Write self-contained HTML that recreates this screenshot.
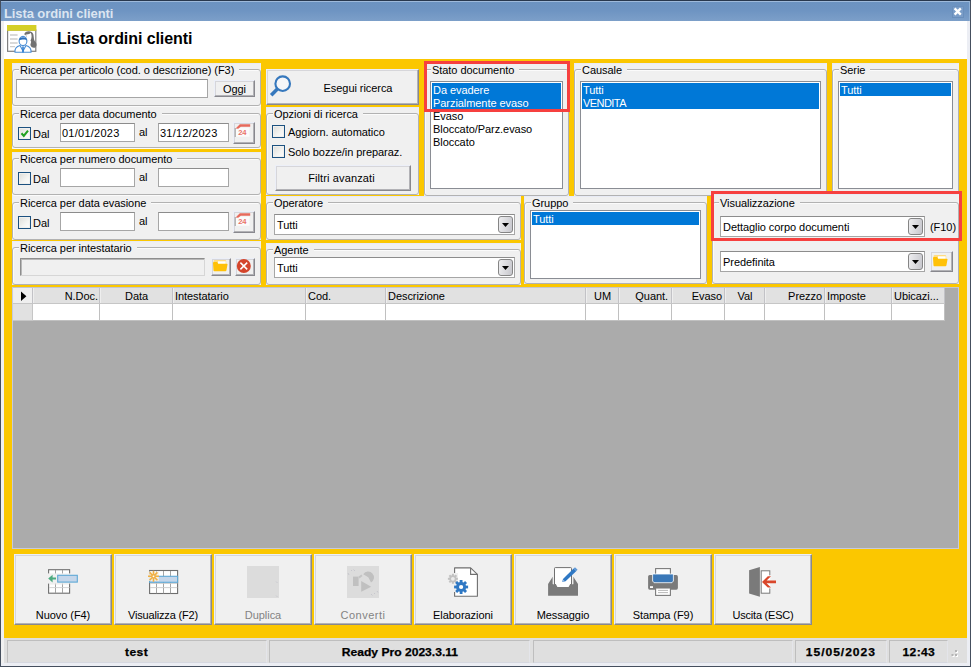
<!DOCTYPE html>
<html><head><meta charset="utf-8"><title>Lista ordini clienti</title>
<style>
*{box-sizing:border-box;margin:0;padding:0}
html,body{width:971px;height:667px;overflow:hidden;background:#f0f0f0}
body{font-family:"Liberation Sans",sans-serif;font-size:11px;color:#000;position:relative;letter-spacing:-0.06px}
.a{position:absolute}
.pn{background:#f0f0f0;box-shadow:inset 1px 1px 0 #e8ebf5}
.gb{border:1px solid #b2b2b2;border-radius:3px;box-shadow:inset 1px 1px 0 #fbfbfb}
.gl{z-index:0;padding:0 5px 0 1px;line-height:15px;height:15px;white-space:nowrap}
.gl::before{content:"";position:absolute;left:0;right:0;top:6px;height:2px;background:#f0f0f0;z-index:-1}
.t{white-space:nowrap;line-height:15px;height:15px}
.in{background:#fff;border:1px solid #a6a6a6;border-top-color:#8c8c8c}
.in .v{position:absolute;left:1px;top:2px;line-height:15px;white-space:nowrap}
.btn{background:#f0f0f0;border:1px solid;border-color:#eceff8 #88888e #88888e #eceff8;box-shadow:inset -1px -1px 0 #b2b2b6,inset 1px 1px 0 #d6d6da}
.btn .c{position:absolute;left:0;right:0;text-align:center;line-height:15px;white-space:nowrap}
.cb{width:13px;height:13px;background:linear-gradient(135deg,#dcdcd8,#f4f4f2 60%,#fdfdfd);border:1px solid #1c5180;box-shadow:inset 0 0 0 1px #f0f0ee}
.lb{background:#fff;border:1px solid #8a8d94}
.sel{background:#0078d7}
.li{position:absolute;left:2px;line-height:15px;height:15px;white-space:nowrap}
.w{color:#fff}
.dd{width:15px;height:17px;border:1px solid #858585;border-radius:3px;background:linear-gradient(100deg,#eeeef0,#d9d9dd 55%,#c6c6cc)}
.red{border:3px solid #f6403f}
.sp{background:#dfdfdf;border:1px solid;border-color:#bebebe #e4e5ea #d6d8e0 #bebebe;font-weight:bold;font-size:11px;text-align:center;line-height:23px;letter-spacing:0;white-space:nowrap}
.sp span{display:inline-block;transform:scaleX(1.1);-webkit-text-stroke:0.25px #000}
.gh{background:#e1e1e1;border-right:1px solid #c2c2c6;border-bottom:1px solid #c6c6c6;height:16px;top:1px;line-height:15px;white-space:nowrap;padding:1px 1px 0 2px;box-shadow:inset 1px 0 0 #eeeeee}
.gc{background:#fff;border-right:1px solid #c0c0c0;border-bottom:1px solid #c0c0c0;height:17px;top:17px}
.bb{top:554px;width:98px;height:71px}
</style></head><body>
<div class="a" style="left:0;top:0;width:971px;height:667px;background:#f0f0f0;border:1px solid #454f5e;border-top-color:#28384e"></div>
<div class="a" style="left:967px;top:21px;width:3px;height:645px;background:#eceef4"></div>
<div class="a" style="left:1px;top:663px;width:969px;height:3px;background:#eceef4"></div>
<div class="a" style="left:1px;top:1px;width:969px;height:20px;background:linear-gradient(#6c93c1,#6e94c2 45%,#7c9fc9);border-top:1px solid #9ebadb;border-right:1px solid #8fafd4"></div>
<div class="a" style="left:4px;top:6px;font-size:13px;font-weight:bold;color:#dbe5f1;line-height:15px;letter-spacing:-0.1px;white-space:nowrap">Lista ordini clienti</div>
<div class="a" style="left:952px;top:6px;width:12px;height:12px;background:#7a9dc8;border:1px solid #6a8fbc"></div>
<div class="a" style="left:4px;top:21px;width:963px;height:38px;background:#fff"></div>
<div class="a" style="left:57px;top:29px;font-size:16px;font-weight:bold;line-height:20px;letter-spacing:-0.08px;white-space:nowrap">Lista ordini clienti</div>
<div class="a" style="left:4px;top:59px;width:963px;height:579px;background:#fbc700"></div>
<div class="a" style="left:4px;top:638px;width:963px;height:25px;background:#dfdfdf"></div>
<div class="a pn" style="left:12px;top:63px;width:249px;height:86px;"></div>
<div class="a pn" style="left:12px;top:152px;width:249px;height:88px;"></div>
<div class="a pn" style="left:12px;top:241px;width:249px;height:44px;"></div>
<div class="a gb" style="left:12px;top:69px;width:249px;height:37px;box-shadow:inset 1px 1px 0 #fbfbfb,0 1px 0 #fbfbfb;"></div>
<div class="a gl" style="left:19px;top:63px;">Ricerca per articolo (cod. o descrizione) (F3)</div>
<div class="a in" style="left:16px;top:79px;width:192px;height:19px;"></div>
<div class="a btn" style="left:214px;top:80px;width:41px;height:17px;"><div class="c" style="top:1px">Oggi</div></div>
<div class="a gb" style="left:12px;top:113px;width:249px;height:35px;box-shadow:inset 1px 1px 0 #fbfbfb,0 1px 0 #fbfbfb;"></div>
<div class="a gl" style="left:19px;top:107px;">Ricerca per data documento</div>
<div class="a cb" style="left:18px;top:127px;width:13px;height:13px;"></div>
<div class="a t" style="left:33px;top:127px;">Dal</div>
<div class="a in" style="left:60px;top:123px;width:75px;height:19px;"><span class="v" style="top:2px;letter-spacing:0.25px">01/01/2023</span></div>
<div class="a t" style="left:139px;top:125px;">al</div>
<div class="a in" style="left:158px;top:123px;width:71px;height:19px;"><span class="v" style="top:2px;letter-spacing:0.25px">31/12/2023</span></div>
<div class="a btn" style="left:233px;top:122px;width:22px;height:22px;"></div>
<div class="a gb" style="left:12px;top:158px;width:249px;height:37px;box-shadow:inset 1px 1px 0 #fbfbfb,0 1px 0 #fbfbfb;"></div>
<div class="a gl" style="left:19px;top:152px;">Ricerca per numero documento</div>
<div class="a cb" style="left:18px;top:172px;width:13px;height:13px;"></div>
<div class="a t" style="left:33px;top:172px;">Dal</div>
<div class="a in" style="left:60px;top:168px;width:75px;height:19px;"></div>
<div class="a t" style="left:139px;top:170px;">al</div>
<div class="a in" style="left:158px;top:168px;width:71px;height:19px;"></div>
<div class="a gb" style="left:12px;top:202px;width:249px;height:38px;"></div>
<div class="a gl" style="left:19px;top:196px;">Ricerca per data evasione</div>
<div class="a cb" style="left:18px;top:216px;width:13px;height:13px;"></div>
<div class="a t" style="left:33px;top:216px;">Dal</div>
<div class="a in" style="left:60px;top:212px;width:75px;height:19px;"></div>
<div class="a t" style="left:139px;top:214px;">al</div>
<div class="a in" style="left:158px;top:212px;width:71px;height:19px;"></div>
<div class="a btn" style="left:233px;top:211px;width:22px;height:22px;"></div>
<div class="a gb" style="left:12px;top:247px;width:249px;height:38px;"></div>
<div class="a gl" style="left:19px;top:241px;">Ricerca per intestatario</div>
<div class="a " style="left:20px;top:258px;width:185px;height:18px;background:#f0f0f0;border:1px solid;border-color:#8e8e8e #d6d6d6 #d6d6d6 #8e8e8e;box-shadow:inset 1px 1px 0 #b8b8b8"></div>
<div class="a btn" style="left:211px;top:258px;width:20px;height:18px;"></div>
<div class="a btn" style="left:235px;top:258px;width:20px;height:18px;"></div>
<div class="a btn" style="left:266px;top:69px;width:153px;height:36px;"><div class="c" style="top:11px;left:31px">Esegui ricerca</div></div>
<div class="a pn" style="left:266px;top:107px;width:153px;height:88px;"></div>
<div class="a gb" style="left:266px;top:113px;width:153px;height:82px;"></div>
<div class="a gl" style="left:273px;top:107px;">Opzioni di ricerca</div>
<div class="a cb" style="left:272px;top:125px;width:13px;height:13px;"></div>
<div class="a t" style="left:288px;top:125px;">Aggiorn. automatico</div>
<div class="a cb" style="left:272px;top:145px;width:13px;height:13px;"></div>
<div class="a t" style="left:288px;top:145px;">Solo bozze/in preparaz.</div>
<div class="a btn" style="left:275px;top:165px;width:136px;height:26px;"><div class="c" style="top:5px;left:-3px;letter-spacing:0.13px">Filtri avanzati</div></div>
<div class="a pn" style="left:266px;top:196px;width:255px;height:44px;"></div>
<div class="a gb" style="left:266px;top:202px;width:255px;height:38px;"></div>
<div class="a gl" style="left:273px;top:196px;">Operatore</div>
<div class="a in" style="left:274px;top:214px;width:241px;height:21px;"><span class="v" style="top:3px;left:2px">Tutti</span><div class="a dd" style="right:1px;top:1px"></div></div>
<div class="a pn" style="left:266px;top:243px;width:255px;height:42px;"></div>
<div class="a gb" style="left:266px;top:249px;width:255px;height:36px;"></div>
<div class="a gl" style="left:273px;top:243px;">Agente</div>
<div class="a in" style="left:274px;top:257px;width:241px;height:21px;"><span class="v" style="top:3px;left:2px">Tutti</span><div class="a dd" style="right:1px;top:1px"></div></div>
<div class="a pn" style="left:424px;top:61px;width:145px;height:135px;"></div>
<div class="a gb" style="left:424px;top:69px;width:145px;height:127px;"></div>
<div class="a gl" style="left:431px;top:63px;">Stato documento</div>
<div class="a lb" style="left:430px;top:81px;width:133px;height:108px;"><div class="a sel" style="left:1px;top:1px;width:129px;height:26px"></div><div class="li w" style="top:1px">Da evadere</div><div class="li w" style="top:14px">Parzialmente evaso</div><div class="li" style="top:27px">Evaso</div><div class="li" style="top:40px">Bloccato/Parz.evaso</div><div class="li" style="top:53px">Bloccato</div></div>
<div class="a red" style="left:424px;top:61px;width:146px;height:51px;"></div>
<div class="a pn" style="left:574px;top:63px;width:253px;height:133px;"></div>
<div class="a gb" style="left:574px;top:69px;width:253px;height:127px;"></div>
<div class="a gl" style="left:581px;top:63px;">Causale</div>
<div class="a lb" style="left:580px;top:81px;width:241px;height:108px;"><div class="a sel" style="left:1px;top:1px;width:237px;height:26px"></div><div class="li w" style="top:1px">Tutti</div><div class="li w" style="top:14px"><span style="letter-spacing:-0.55px">VENDITA</span></div></div>
<div class="a pn" style="left:832px;top:63px;width:127px;height:133px;"></div>
<div class="a gb" style="left:832px;top:69px;width:127px;height:127px;"></div>
<div class="a gl" style="left:839px;top:63px;">Serie</div>
<div class="a lb" style="left:838px;top:81px;width:115px;height:108px;"><div class="a sel" style="left:1px;top:1px;width:111px;height:13px"></div><div class="li w" style="top:1px">Tutti</div></div>
<div class="a pn" style="left:524px;top:196px;width:183px;height:88px;"></div>
<div class="a gb" style="left:524px;top:202px;width:183px;height:82px;"></div>
<div class="a gl" style="left:531px;top:196px;">Gruppo</div>
<div class="a lb" style="left:530px;top:210px;width:171px;height:69px;"><div class="a sel" style="left:1px;top:1px;width:167px;height:13px"></div><div class="li w" style="top:1px">Tutti</div></div>
<div class="a pn" style="left:712px;top:194px;width:247px;height:90px;"></div>
<div class="a gb" style="left:712px;top:202px;width:247px;height:82px;"></div>
<div class="a gl" style="left:719px;top:196px;">Visualizzazione</div>
<div class="a in" style="left:720px;top:216px;width:205px;height:21px;"><span class="v" style="top:3px;left:2px">Dettaglio corpo documenti</span><div class="a dd" style="right:1px;top:1px"></div></div>
<div class="a t" style="left:930px;top:220px;">(F10)</div>
<div class="a in" style="left:720px;top:251px;width:205px;height:21px;"><span class="v" style="top:3px;left:2px">Predefinita</span><div class="a dd" style="right:1px;top:1px"></div></div>
<div class="a btn" style="left:930px;top:251px;width:23px;height:21px;"></div>
<div class="a red" style="left:711px;top:191px;width:251px;height:50px;"></div>
<div class="a" style="left:12px;top:287px;width:947px;height:262px;background:#ababab;overflow:hidden;border:1px solid #c6cadc;border-top-color:#c4c6d0"><div class="a gh" style="left:0px;top:0;width:20px;text-align:left;background:#efefef"></div><div class="a gh" style="left:20px;top:0;width:67px;text-align:right">N.Doc.</div><div class="a gh" style="left:87px;top:0;width:73px;text-align:center">Data</div><div class="a gh" style="left:160px;top:0;width:133px;text-align:left">Intestatario</div><div class="a gh" style="left:293px;top:0;width:80px;text-align:left">Cod.</div><div class="a gh" style="left:373px;top:0;width:200px;text-align:left">Descrizione</div><div class="a gh" style="left:573px;top:0;width:33px;text-align:center">UM</div><div class="a gh" style="left:606px;top:0;width:53px;text-align:right;padding-right:3px">Quant.</div><div class="a gh" style="left:659px;top:0;width:53px;text-align:right;padding-right:2px">Evaso</div><div class="a gh" style="left:712px;top:0;width:40px;text-align:center">Val</div><div class="a gh" style="left:752px;top:0;width:60px;text-align:right;padding-right:2px">Prezzo</div><div class="a gh" style="left:812px;top:0;width:67px;text-align:left">Imposte</div><div class="a gh" style="left:879px;top:0;width:53px;text-align:left">Ubicazi...</div><div class="a gc" style="left:0px;top:16px;width:20px;background:#e1e1e1;border-color:#c6c6c6"></div><div class="a gc" style="left:20px;top:16px;width:67px"></div><div class="a gc" style="left:87px;top:16px;width:73px"></div><div class="a gc" style="left:160px;top:16px;width:133px"></div><div class="a gc" style="left:293px;top:16px;width:80px"></div><div class="a gc" style="left:373px;top:16px;width:200px"></div><div class="a gc" style="left:573px;top:16px;width:33px"></div><div class="a gc" style="left:606px;top:16px;width:53px"></div><div class="a gc" style="left:659px;top:16px;width:53px"></div><div class="a gc" style="left:712px;top:16px;width:40px"></div><div class="a gc" style="left:752px;top:16px;width:60px"></div><div class="a gc" style="left:812px;top:16px;width:67px"></div><div class="a gc" style="left:879px;top:16px;width:53px"></div></div>
<div class="a btn bb" style="left:14px"><div class="c" style="top:53px">Nuovo (F4)</div></div>
<div class="a btn bb" style="left:114px"><div class="c" style="top:53px;letter-spacing:-0.16px">Visualizza (F2)</div></div>
<div class="a btn bb" style="left:214px"><div class="c" style="top:53px;color:#838383">Duplica</div></div>
<div class="a btn bb" style="left:314px"><div class="c" style="top:53px;color:#838383;letter-spacing:0.5px">Converti</div></div>
<div class="a btn bb" style="left:414px"><div class="c" style="top:53px">Elaborazioni</div></div>
<div class="a btn bb" style="left:514px"><div class="c" style="top:53px">Messaggio</div></div>
<div class="a btn bb" style="left:614px"><div class="c" style="top:53px">Stampa (F9)</div></div>
<div class="a btn bb" style="left:714px"><div class="c" style="top:53px;letter-spacing:-0.22px">Uscita (ESC)</div></div>
<div class="a sp" style="left:7px;top:640px;width:260px;height:23px"><span style="letter-spacing:0.4px">test</span></div>
<div class="a sp" style="left:269px;top:640px;width:261px;height:23px"><span style="letter-spacing:0px">Ready Pro 2023.3.11</span></div>
<div class="a sp" style="left:533px;top:640px;width:260px;height:23px"><span style="letter-spacing:0px"></span></div>
<div class="a sp" style="left:795px;top:640px;width:92px;height:23px"><span style="letter-spacing:0.86px">15/05/2023</span></div>
<div class="a sp" style="left:889px;top:640px;width:59px;height:23px"><span style="letter-spacing:0.31px">12:43</span></div>
<svg class="a" style="left:0;top:0;pointer-events:none" width="971" height="667" viewBox="0 0 971 667"><path d="M954.6 8.4L960.8 14.6M960.8 8.4L954.6 14.6" stroke="#fff" stroke-width="2.3"/>
<g transform="translate(7,25)">
<rect x="0.6" y="5" width="28.2" height="21.3" fill="#fff" stroke="#808080" stroke-width="1.2"/>
<rect x="0" y="0" width="29.4" height="5.8" fill="#d4cf27"/>
<g stroke="#cdcdcd" stroke-width="1.4"><path d="M3 10H10.6M3 14H10.6M3 18H10.6M3 21.6H8"/></g>
<path d="M17.2 9.6C17.6 5.6 25.2 4.8 26.4 9.6C27 12.6 26.6 15 28 16.4C30 17.6 30 21 28.6 22.2C27 23.6 24.4 22.6 23.6 20.6C23 18.6 25 17.4 23.6 15.4C22.6 14 21.6 15.5 21.6 15.5L18.4 9.8Z" fill="#727272"/>
<path d="M19 9.4C21 9.6 23 8.8 23.6 7.8C24.8 9.4 25 13 23.6 15.2L20.5 15.6Z" fill="#fff"/>
<path d="M8 27.3C7.5 23 9.5 21.5 13 20.5L16 26L19 20.5C22.5 21.5 24.5 23 24 27.3Z" fill="#fff" stroke="#4a8ed6" stroke-width="1.1"/>
<path d="M15.2 21.5H16.8V27.5H15.2Z" fill="#2f7dd0"/>
<ellipse cx="16" cy="16" rx="3.9" ry="4.6" fill="#fff" stroke="#4a8ed6" stroke-width="1.1"/>
<path d="M12 15.5C11.5 11 20.5 11 20 15.5C18.5 14 14 14.6 12 15.5Z" fill="#2a6fbb"/>
</g>
<path d="M21.5 133.2L23.8 135.9L28 130.6" stroke="#21a121" stroke-width="2.1" fill="none"/>
<g transform="translate(234,123)"><path d="M1.6 4.8H15.4V13.8H1.6Z" fill="#fbfbfb"/><path d="M1.2 5V14" stroke="#9a9a9a" stroke-width="1"/><path d="M1.6 5.6L5.8 1.2H16.2V3.8H6.8L4.2 5.8Z" fill="#e66a5c"/><text x="4.3" y="12.3" font-family="Liberation Sans" font-weight="bold" font-size="7.6" fill="#ea7468" letter-spacing="-0.3">24</text></g>
<g transform="translate(234,212)"><path d="M1.6 4.8H15.4V13.8H1.6Z" fill="#fbfbfb"/><path d="M1.2 5V14" stroke="#9a9a9a" stroke-width="1"/><path d="M1.6 5.6L5.8 1.2H16.2V3.8H6.8L4.2 5.8Z" fill="#e66a5c"/><text x="4.3" y="12.3" font-family="Liberation Sans" font-weight="bold" font-size="7.6" fill="#ea7468" letter-spacing="-0.3">24</text></g>
<g transform="translate(212.4,259.6)"><path d="M1.2 1.4Q1.2 0.4 2.2 0.4H12.8Q13.8 0.4 13.8 1.4V4.4H1.2Z" fill="#ffdc82"/><path d="M5.6 1.7H13.3V4.8H5.6Z" fill="#fff"/><path d="M0.6 3.4Q0.6 2.4 1.6 2.4H4.6L5.8 4.1H14.4Q15.3 4.1 15.1 5L14 10.8Q13.8 11.6 13 11.6H2Q1.2 11.6 1.1 10.8Z" fill="#ffc107"/></g>
<g transform="translate(932.4,254.6)"><path d="M1.2 1.4Q1.2 0.4 2.2 0.4H12.8Q13.8 0.4 13.8 1.4V4.4H1.2Z" fill="#ffdc82"/><path d="M5.6 1.7H13.3V4.8H5.6Z" fill="#fff"/><path d="M0.6 3.4Q0.6 2.4 1.6 2.4H4.6L5.8 4.1H14.4Q15.3 4.1 15.1 5L14 10.8Q13.8 11.6 13 11.6H2Q1.2 11.6 1.1 10.8Z" fill="#ffc107"/></g>
<circle cx="243.8" cy="266" r="7" fill="#d4452c"/><path d="M240.4 262.6L247.2 269.4M247.2 262.6L240.4 269.4" stroke="#fff" stroke-width="1.5"/>
<circle cx="282.7" cy="83.7" r="7.3" fill="#f6f6f8" stroke="#3678bd" stroke-width="2.1"/><path d="M277.6 88.8L271.2 95.2" stroke="#3678bd" stroke-width="3.6"/>
<path d="M502.0 223H509.0L505.5 227Z" fill="#000"/>
<path d="M502.0 266H509.0L505.5 270Z" fill="#000"/>
<path d="M912.0 225H919.0L915.5 229Z" fill="#000"/>
<path d="M912.0 260H919.0L915.5 264Z" fill="#000"/>
<path d="M21 291.5L26.4 296.3L21 301Z" fill="#000"/>
<rect x="48.6" y="569.7" width="21" height="23.5" fill="#fff" stroke="#6e6e6e" stroke-width="1.1"/><path d="M55.5 570V593M62.5 570V593" stroke="#9a9a9a" stroke-width="0.9"/><path d="M49 587.6H69.6" stroke="#cfcfcf" stroke-width="0.9"/><rect x="47" y="573.4" width="24" height="10.2" fill="#f0f0f0"/><path d="M49.4 584H69.2" stroke="#e6e6e6" stroke-width="0.8"/><rect x="57.7" y="575.3" width="19.6" height="6.8" fill="#c5d6ea" stroke="#5ea9d6" stroke-width="1.1"/><path d="M48.2 578.6L52.6 574.8V577.6H56V579.6H52.6V582.4Z" fill="#4dab80"/>
<rect x="149.6" y="570.5" width="28" height="23" fill="#fff" stroke="#6e6e6e" stroke-width="1.1"/><path d="M156.5 571V593.4M163.5 571V593.4M170.5 571V593.4" stroke="#9a9a9a" stroke-width="0.9"/><path d="M150 587.6H177.4M150 583.4H177.4" stroke="#cacaca" stroke-width="0.9"/><rect x="149.6" y="576.3" width="28" height="6" fill="#c5d6ea" stroke="#5ea9d6" stroke-width="1.1"/><rect x="148.5" y="571.4" width="10.4" height="9.6" fill="#f4f0e6" opacity="0.85"/><g stroke="#f0b044" stroke-width="1.6"><path d="M153.5 570.8V581.8M148 576.3H159M149.6 572.4L157.4 580.2M157.4 572.4L149.6 580.2"/></g><circle cx="153.5" cy="576.3" r="0.9" fill="#fff"/>
<rect x="247" y="566" width="32" height="32" fill="#dcdcdc"/><path d="M276 581.5l1.5 1.5M276 595.5l1.5 1.5" stroke="#c4c4cc" stroke-width="0.8"/>
<rect x="347" y="566" width="32" height="32" fill="#dcdcdc"/><path d="M353 576.6H358.6V586H353Z" fill="#c0c0c0"/><path d="M358.6 576.6L361.4 574.6L362.6 576L359.4 578.6Z" fill="#c4c4c4"/><path d="M368.3 577.3L363.2 574.2A5.9 5.9 0 1 1 371 582.6Z" fill="#c0c0c0"/><path d="M361.2 581V591.8L371.2 586.8Z" fill="#c0c0c0"/><path d="M348 573l1 2M351 570l1 1M353.5 569.5l1.5 1.5M371 594l1.5 1.5M374 593l1 1M377 591l1 1.5" stroke="#c4c4cc" stroke-width="0.9"/>
<path d="M454.6 567.9H470.6L477.4 574.4V596.2H454.6Z" fill="#fff" stroke="#6e6e6e" stroke-width="1.1" stroke-linejoin="round"/><path d="M470.6 567.9V574.4H477.4" fill="none" stroke="#6e6e6e" stroke-width="1.1"/><rect x="450" y="573" width="8" height="19" fill="#f0f0f0"/><path d="M455 573V592" stroke="#fff" stroke-width="0.1"/><rect x="451.90" y="573.80" width="2.00" height="5.00" transform="rotate(0.0 452.90 578.80)" fill="#c2c2c2"/><rect x="451.90" y="573.80" width="2.00" height="5.00" transform="rotate(45.0 452.90 578.80)" fill="#c2c2c2"/><rect x="451.90" y="573.80" width="2.00" height="5.00" transform="rotate(90.0 452.90 578.80)" fill="#c2c2c2"/><rect x="451.90" y="573.80" width="2.00" height="5.00" transform="rotate(135.0 452.90 578.80)" fill="#c2c2c2"/><rect x="451.90" y="573.80" width="2.00" height="5.00" transform="rotate(180.0 452.90 578.80)" fill="#c2c2c2"/><rect x="451.90" y="573.80" width="2.00" height="5.00" transform="rotate(225.0 452.90 578.80)" fill="#c2c2c2"/><rect x="451.90" y="573.80" width="2.00" height="5.00" transform="rotate(270.0 452.90 578.80)" fill="#c2c2c2"/><rect x="451.90" y="573.80" width="2.00" height="5.00" transform="rotate(315.0 452.90 578.80)" fill="#c2c2c2"/><circle cx="452.90" cy="578.80" r="3.60" fill="#c2c2c2"/><circle cx="452.90" cy="578.80" r="1.90" fill="#ececec"/><rect x="459.70" y="580.00" width="2.80" height="7.00" transform="rotate(0.0 461.10 587.00)" fill="#2f78c4"/><rect x="459.70" y="580.00" width="2.80" height="7.00" transform="rotate(45.0 461.10 587.00)" fill="#2f78c4"/><rect x="459.70" y="580.00" width="2.80" height="7.00" transform="rotate(90.0 461.10 587.00)" fill="#2f78c4"/><rect x="459.70" y="580.00" width="2.80" height="7.00" transform="rotate(135.0 461.10 587.00)" fill="#2f78c4"/><rect x="459.70" y="580.00" width="2.80" height="7.00" transform="rotate(180.0 461.10 587.00)" fill="#2f78c4"/><rect x="459.70" y="580.00" width="2.80" height="7.00" transform="rotate(225.0 461.10 587.00)" fill="#2f78c4"/><rect x="459.70" y="580.00" width="2.80" height="7.00" transform="rotate(270.0 461.10 587.00)" fill="#2f78c4"/><rect x="459.70" y="580.00" width="2.80" height="7.00" transform="rotate(315.0 461.10 587.00)" fill="#2f78c4"/><circle cx="461.10" cy="587.00" r="5.00" fill="#2f78c4"/><circle cx="461.10" cy="587.00" r="2.10" fill="#fff"/>
<rect x="554.5" y="567.6" width="17" height="20" rx="0.8" fill="#fff" stroke="#707070" stroke-width="1"/><path d="M548.1 584L552.7 576.8V584H555.8L557.4 587H568.6L570.2 584H573.3V576.8L578 584V595.8H548.1Z" fill="#7a7a7a"/><path d="M553.4 578V584.4M572.7 578V584.4" stroke="#ececec" stroke-width="0.9"/><path d="M562.2 581.9L563 579L573.6 568.4L576.4 571.1L565.6 581.3Z" fill="#2f78c4"/><path d="M573.6 568.4L575 567.2L577.6 569.8L576.4 571.1Z" fill="#5d97d6"/><path d="M562.2 581.9L563 579.4L564.8 581.2Z" fill="#9bbfe6"/>
<rect x="655.6" y="568.6" width="14.8" height="8" fill="#fff" stroke="#7a7a7a" stroke-width="1.1"/><rect x="648.1" y="575.1" width="29.8" height="14.6" rx="1.6" fill="#7a7a7a"/><path d="M652.6 574V581L654 582.7H672L673.4 581V574Z" fill="#3a78b8" stroke="#fff" stroke-width="0.8"/><rect x="650" y="586.2" width="3" height="1.8" fill="#fff"/><rect x="655.6" y="588" width="14.8" height="7.4" fill="#fff" stroke="#7a7a7a" stroke-width="1.1"/><path d="M658 590.4H668M658 592.6H668" stroke="#b0b0b0" stroke-width="0.9"/>
<rect x="761.2" y="570.8" width="8.6" height="22.4" fill="#fff" stroke="#7a7a7a" stroke-width="1"/><rect x="768.6" y="575.4" width="2.6" height="13" fill="#fff"/><rect x="770.2" y="575.4" width="1.6" height="13" fill="#f0f0f0"/><path d="M749.1 570.3L759.9 567V596.7L749.1 593.4Z" fill="#7a7a7a"/><path d="M762 581.9L767.8 576.3H771L766.6 580.5H776V583.3H766.6L771 587.5H767.8Z" fill="#d9472b"/>
<g fill="#fff"><rect x="956" y="651" width="2" height="2"/><rect x="952.5" y="655" width="2" height="2"/><rect x="956" y="655" width="2" height="2"/></g><g fill="#b4b4b4"><rect x="955" y="650" width="2" height="2"/><rect x="951.5" y="654" width="2" height="2"/><rect x="955" y="654" width="2" height="2"/></g></svg>
</body></html>
